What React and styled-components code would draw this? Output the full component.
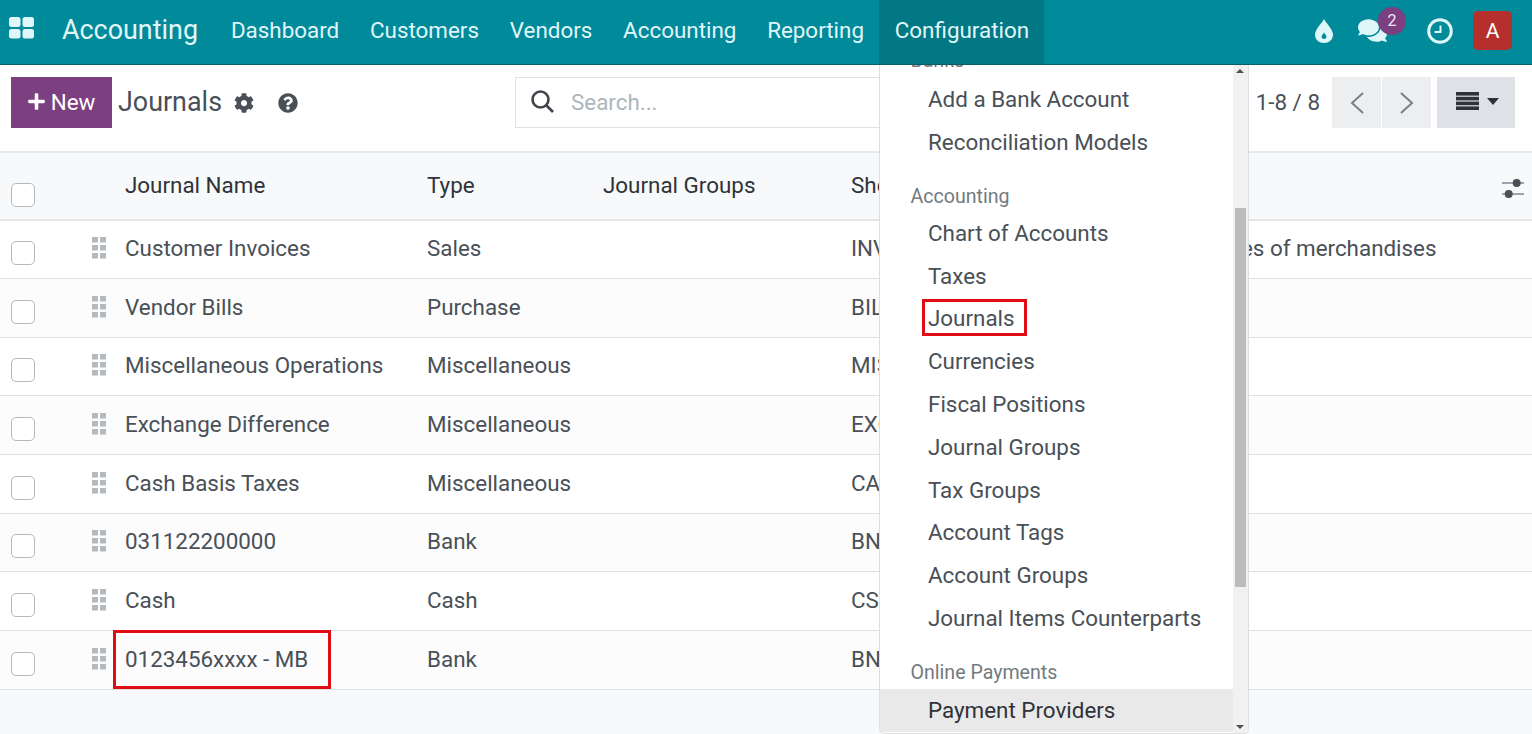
import styled, { createGlobalStyle } from "styled-components";
import { FaCog, FaQuestionCircle, FaComments, FaPlus } from "react-icons/fa";

const GlobalStyle = createGlobalStyle`
  html, body {
    margin: 0;
    height: 100%;
    background: #fff;
    overflow: hidden;
  }
  body {
    font-family: Roboto, "Liberation Sans", sans-serif;
    font-size: 22.4px;
    color: #495057;
  }
  * { box-sizing: border-box; }
`;

const Page = styled.div`
  position: relative;
  width: 1532px;
  height: 734px;
  overflow: hidden;
  display: flex;
  flex-direction: column;
  background: #f8f9fa;
`;

const NavBar = styled.header`
  height: 65px;
  flex: none;
  display: flex;
  align-items: stretch;
  background: #018a9a;
  border-bottom: 1px solid #0b5c66;
  color: #e0f7fa;
`;

const AppsButton = styled.div`
  width: 62px;
  padding: 16px 0 0 8px;
`;

const Brand = styled.div`
  font-size: 26.9px;
  line-height: 60px;
  margin-right: 17.5px;
`;

const NavItem = styled.div`
  padding: 0 15.4px;
  line-height: 61px;
  background: ${(p) => (p.$active ? "#017884" : "transparent")};
`;

const NavRight = styled.div`
  margin-left: auto;
  display: flex;
  align-items: center;
  padding: 0 20px 3px 0;
`;

const NavIcon = styled.div`
  width: ${(p) => p.$w}px;
  margin-left: ${(p) => p.$ml || 0}px;
  display: flex;
  justify-content: center;
  position: relative;
  color: #e0f7fa;
`;

const Badge = styled.span`
  position: absolute;
  top: -9px;
  right: -9px;
  width: 28px;
  height: 28px;
  border-radius: 50%;
  background: #7c4080;
  color: #f3e6f4;
  font-size: 16px;
  line-height: 27px;
  text-align: center;
`;

const Avatar = styled.div`
  width: 39px;
  height: 39px;
  margin-left: 13px;
  border-radius: 5px;
  background: #b5302d;
  color: #fff;
  font-size: 21px;
  line-height: 40px;
  text-align: center;
`;

const ControlPanel = styled.div`
  height: 88px;
  flex: none;
  background: #fff;
  border-bottom: 2px solid #e6e8ea;
  display: grid;
  grid-template-columns: 515px 1fr auto;
  padding: 12px 0 0;
  align-items: start;
`;

const TitleGroup = styled.div`
  display: flex;
  align-items: center;
  padding-left: 11px;
  height: 51px;
`;

const NewButton = styled.button`
  width: 101px;
  height: 51px;
  border: 0;
  padding: 0 1px 2px 0;
  background: #7c4080;
  color: #fff;
  font: 400 22.4px Roboto, sans-serif;
  display: flex;
  align-items: center;
  justify-content: center;
  gap: 5px;
`;

const PageTitle = styled.div`
  font-size: 26.9px;
  margin-left: 6px;
  padding-bottom: 2px;
  color: #495057;
`;

const TitleIcon = styled.span`
  display: flex;
  margin-left: ${(p) => p.$ml}px;
  color: #495057;
`;

const SearchBox = styled.div`
  height: 51px;
  border: 1px solid #dee2e6;
  display: flex;
  align-items: center;
  padding: 0 0 2px 15px;
  gap: 17px;
  color: #adb5bd;
`;

const Pager = styled.div`
  display: flex;
  align-items: center;
  height: 51px;
  padding-left: 8px;
  margin-right: 17px;
`;

const PagerText = styled.span`
  margin: 0 12px 2px 0;
`;

const PagerButton = styled.div`
  width: 49px;
  height: 51px;
  margin-right: 1px;
  background: #eceef0;
  display: flex;
  align-items: center;
  justify-content: center;
`;

const ViewSwitch = styled.div`
  width: 78px;
  height: 51px;
  margin-left: 5px;
  padding: 0 0 3px 19px;
  background: #dee1e5;
  display: flex;
  align-items: center;
  gap: 8px;
`;

const ListTable = styled.table`
  width: 1532px;
  table-layout: fixed;
  border-collapse: collapse;
  background: #fff;
`;

const HeadRow = styled.tr`
  height: 67px;
  background: #f8f9fa;
  border-bottom: 2px solid #e4e6e8;
`;

const HeadCell = styled.th`
  font-weight: 400;
  text-align: left;
  color: #2f3338;
  padding: 0 0 3px 0;
  white-space: nowrap;
`;

const Row = styled.tr`
  height: 58.65px;
  border-bottom: 1px solid #dee2e6;
  background: ${(p) => (p.$odd ? "#fff" : "#fcfcfc")};
`;

const Cell = styled.td`
  padding: 0 0 2.4px 0;
  white-space: nowrap;
  position: ${(p) => (p.$rel ? "relative" : "static")};
`;

const RowLead = styled.div`
  display: flex;
  align-items: center;
`;

const Check = styled.span`
  display: block;
  flex: none;
  width: 24px;
  height: 24px;
  margin: ${(p) => p.$mt}px 0 0 11px;
  border: 1px solid #b5b9bd;
  border-radius: 5px;
  background: #fff;
`;

const Highlight = styled.span`
  position: absolute;
  border: 3px solid #e00d14;
  pointer-events: none;
`;

const RowHighlight = styled(Highlight)`
  left: -12px;
  top: -1px;
  width: 218px;
  height: 59px;
`;

const Menu = styled.nav`
  position: absolute;
  left: 879px;
  top: 65px;
  width: 370px;
  height: 669px;
  background: #fff;
  border: 1px solid #dcdfe2;
  border-top: 0;
  border-radius: 0 0 5px 5px;
  overflow: hidden;
  padding-right: 15px;
  z-index: 2;
`;

const MenuList = styled.div`
  margin-top: -16.4px;
`;

const MenuHeader = styled.div`
  font-size: 19.6px;
  line-height: 24px;
  color: #737a80;
  padding-left: 30.5px;
  margin-top: ${(p) => p.$mt || 0}px;
  margin-bottom: ${(p) => p.$mb || 0}px;
`;

const MenuItem = styled.div`
  position: relative;
  height: 42.8px;
  line-height: 42px;
  padding-left: 48px;
  color: ${(p) => (p.$hover ? "#2f3338" : "#495057")};
  background: ${(p) => (p.$hover ? "#e9e9ea" : "transparent")};
`;

const MenuHighlight = styled(Highlight)`
  left: 42px;
  top: 2px;
  width: 105px;
  height: 37px;
`;

const ScrollTrack = styled.div`
  position: absolute;
  right: 0;
  top: 0;
  bottom: 0;
  width: 15px;
  background: #f1f1f1;
`;

const ScrollThumb = styled.div`
  position: absolute;
  left: 2px;
  top: 143px;
  width: 11px;
  height: 379px;
  background: #bcbcbc;
`;

const ScrollArrow = styled.span`
  position: absolute;
  left: 3px;
  ${(p) => (p.$down ? "bottom: 4px;" : "top: 4px;")}
  width: 0;
  height: 0;
  border-left: 4px solid transparent;
  border-right: 4px solid transparent;
  ${(p) => (p.$down ? "border-top: 4px solid #505050;" : "border-bottom: 4px solid #505050;")}
`;

const HandleSvg = styled.svg`
  flex: none;
  display: block;
  margin-left: 57px;
`;

const SlidersSvg = styled.svg`
  display: block;
  margin-top: 9px;
`;

const AppsIcon = () => (
  <svg width="28" height="24" viewBox="0 0 28 24" fill="#e0f7fa">
    <rect x="1" y="1" width="11.5" height="10" rx="2.5" />
    <rect x="14.5" y="1" width="11.5" height="10" rx="2.5" />
    <rect x="1" y="13" width="11.5" height="9.5" rx="2.5" />
    <rect x="14.5" y="13" width="11.5" height="9.5" rx="2.5" />
  </svg>
);

const DropIcon = () => (
  <svg width="18" height="24" viewBox="0 0 18 24" fill="#e0f7fa" fillRule="evenodd">
    <path d="M9 0C10 3 18 10 18 15.5 18 20.5 14 24 9 24S0 20.5 0 15.5C0 10 8 3 9 0ZM9 13.5c-1 1.6-2.4 2.8-2.4 4.2 0 1.3 1.1 2.3 2.4 2.3s2.4-1 2.4-2.3c0-1.4-1.4-2.6-2.4-4.2Z" />
  </svg>
);

const ClockIcon = () => (
  <svg width="26" height="26" viewBox="0 0 26 26" fill="none" stroke="#e0f7fa">
    <circle cx="13" cy="13" r="11.3" strokeWidth="3" />
    <path d="M13.5 7.5V14H7.5" strokeWidth="2" />
  </svg>
);

const SearchIcon = () => (
  <svg width="23" height="23" viewBox="0 0 23 23" fill="none" stroke="#3f454b" strokeWidth="2.6">
    <circle cx="9.5" cy="9.5" r="8" />
    <path d="M15.5 15.5 22 22" />
  </svg>
);

const DragHandle = () => (
  <HandleSvg width="15" height="22" viewBox="0 0 15 22" fill="#b3b9bf">
    <rect x="0" y="0" width="6" height="5.5" />
    <rect x="8" y="0" width="6" height="5.5" />
    <rect x="0" y="8" width="6" height="5.5" />
    <rect x="8" y="8" width="6" height="5.5" />
    <rect x="0" y="16" width="6" height="5.5" />
    <rect x="8" y="16" width="6" height="5.5" />
  </HandleSvg>
);

const Chevron = ({ dir }) => (
  <svg width="16" height="24" viewBox="0 0 16 24" fill="none" stroke="#7a7f84" strokeWidth="2">
    <path d={dir === "left" ? "M14 2 3 12l11 10" : "M2 2l11 10L2 22"} />
  </svg>
);

const ListIcon = () => (
  <svg width="23" height="18" viewBox="0 0 23 18" fill="#2f3338">
    <rect x="0" y="0" width="23" height="3.6" />
    <rect x="0" y="4.8" width="23" height="3.6" />
    <rect x="0" y="9.6" width="23" height="3.6" />
    <rect x="0" y="14.4" width="23" height="3.6" />
  </svg>
);

const Caret = () => (
  <svg width="12" height="7" viewBox="0 0 12 7" fill="#2f3338">
    <path d="M0 0h12L6 7z" />
  </svg>
);

const SlidersIcon = () => (
  <SlidersSvg width="24" height="22" viewBox="0 0 24 22" fill="#495057" stroke="#495057" strokeWidth="1.2">
    <path d="M1 5h22M1 16h22" />
    <circle cx="15.7" cy="5" r="3.4" />
    <circle cx="7.7" cy="16" r="3.4" />
  </SlidersSvg>
);

const rows = [
  ["Customer Invoices", "Sales", "INV", "Sales of merchandises"],
  ["Vendor Bills", "Purchase", "BILL", ""],
  ["Miscellaneous Operations", "Miscellaneous", "MISC", ""],
  ["Exchange Difference", "Miscellaneous", "EXCH", ""],
  ["Cash Basis Taxes", "Miscellaneous", "CABA", ""],
  ["031122200000", "Bank", "BNK1", ""],
  ["Cash", "Cash", "CSH1", ""],
  ["0123456xxxx - MB", "Bank", "BNK2", ""],
];

const navItems = ["Dashboard", "Customers", "Vendors", "Accounting", "Reporting", "Configuration"];

export default function App() {
  return (
    <Page>
      <GlobalStyle />
      <NavBar>
        <AppsButton>
          <AppsIcon />
        </AppsButton>
        <Brand>Accounting</Brand>
        {navItems.map((item) => (
          <NavItem key={item} $active={item === "Configuration"}>
            {item}
          </NavItem>
        ))}
        <NavRight>
          <NavIcon $w={46}>
            <DropIcon />
          </NavIcon>
          <NavIcon $w={50}>
            <FaComments size={29} />
            <Badge>2</Badge>
          </NavIcon>
          <NavIcon $w={40} $ml={23}>
            <ClockIcon />
          </NavIcon>
          <Avatar>A</Avatar>
        </NavRight>
      </NavBar>

      <ControlPanel>
        <TitleGroup>
          <NewButton>
            <FaPlus size={19} />
            New
          </NewButton>
          <PageTitle>Journals</PageTitle>
          <TitleIcon $ml={12}>
            <FaCog size={20} />
          </TitleIcon>
          <TitleIcon $ml={24}>
            <FaQuestionCircle size={20} />
          </TitleIcon>
        </TitleGroup>
        <SearchBox>
          <SearchIcon />
          Search...
        </SearchBox>
        <Pager>
          <PagerText>1-8 / 8</PagerText>
          <PagerButton>
            <Chevron dir="left" />
          </PagerButton>
          <PagerButton>
            <Chevron dir="right" />
          </PagerButton>
          <ViewSwitch>
            <ListIcon />
            <Caret />
          </ViewSwitch>
        </Pager>
      </ControlPanel>

      <ListTable>
        <colgroup>
          <col style={{ width: 125 }} />
          <col style={{ width: 302 }} />
          <col style={{ width: 176 }} />
          <col style={{ width: 248 }} />
          <col style={{ width: 359 }} />
          <col style={{ width: 291 }} />
          <col />
        </colgroup>
        <thead>
          <HeadRow>
            <HeadCell>
              <Check $mt={20} />
            </HeadCell>
            <HeadCell>Journal Name</HeadCell>
            <HeadCell>Type</HeadCell>
            <HeadCell>Journal Groups</HeadCell>
            <HeadCell>Short Code</HeadCell>
            <HeadCell />
            <HeadCell>
              <SlidersIcon />
            </HeadCell>
          </HeadRow>
        </thead>
        <tbody>
          {rows.map((row, i) => (
            <Row key={row[0]} $odd={i % 2 === 0}>
              <Cell>
                <RowLead>
                  <Check $mt={10} />
                  <DragHandle />
                </RowLead>
              </Cell>
              <Cell $rel={i === 7}>
                {row[0]}
                {i === 7 && <RowHighlight />}
              </Cell>
              <Cell>{row[1]}</Cell>
              <Cell />
              <Cell>{row[2]}</Cell>
              <Cell>{row[3]}</Cell>
              <Cell />
            </Row>
          ))}
        </tbody>
      </ListTable>

      <Menu>
        <MenuList>
          <MenuHeader $mb={5.5}>Banks</MenuHeader>
          <MenuItem>Add a Bank Account</MenuItem>
          <MenuItem>Reconciliation Models</MenuItem>
          <MenuHeader $mt={21} $mb={3.2}>Accounting</MenuHeader>
          <MenuItem>Chart of Accounts</MenuItem>
          <MenuItem>Taxes</MenuItem>
          <MenuItem>
            Journals
            <MenuHighlight />
          </MenuItem>
          <MenuItem>Currencies</MenuItem>
          <MenuItem>Fiscal Positions</MenuItem>
          <MenuItem>Journal Groups</MenuItem>
          <MenuItem>Tax Groups</MenuItem>
          <MenuItem>Account Tags</MenuItem>
          <MenuItem>Account Groups</MenuItem>
          <MenuItem>Journal Items Counterparts</MenuItem>
          <MenuHeader $mt={21} $mb={4}>Online Payments</MenuHeader>
          <MenuItem $hover>Payment Providers</MenuItem>
        </MenuList>
        <ScrollTrack>
          <ScrollArrow />
          <ScrollThumb />
          <ScrollArrow $down />
        </ScrollTrack>
      </Menu>
    </Page>
  );
}
